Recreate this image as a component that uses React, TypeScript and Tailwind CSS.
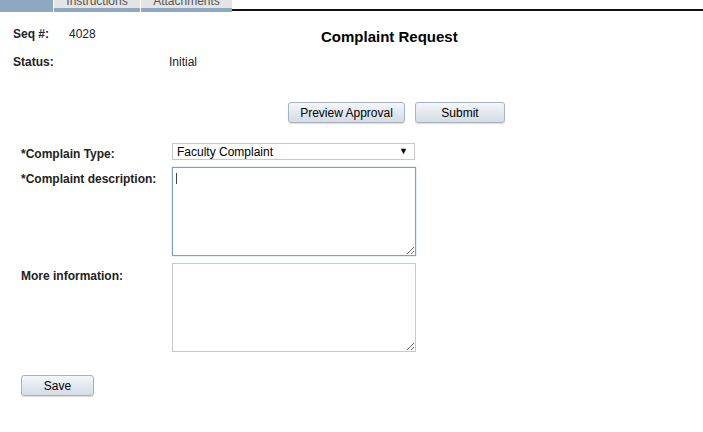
const btn =
  "h-[21px] rounded-[3px] border border-[#a9b3bf] bg-gradient-to-b from-[#f4f7fa] to-[#d3dbe4] text-[12px] text-black shadow-[0_1px_1px_rgba(0,0,0,0.15)]";

function Tabs() {
  return (
    <div className="flex h-[12px] items-end">
      <div className="h-[12px] w-[53px] shrink-0 bg-[#8fa8c2]" />
      <div className="ml-[1px] flex h-[12px] w-[86px] shrink-0 flex-col">
        <div className="flex-1 overflow-hidden bg-[#e4e4e4] text-center text-[12px] leading-[2px] text-[#555]">Instructions</div>
        <div className="h-[4px] bg-[#8fa8c2]" />
      </div>
      <div className="ml-[1px] flex h-[12px] w-[91px] shrink-0 flex-col">
        <div className="flex-1 overflow-hidden bg-[#e4e4e4] text-center text-[12px] leading-[2px] text-[#555]">Attachments</div>
        <div className="h-[4px] bg-[#8fa8c2]" />
      </div>
      <div className="mb-[1px] h-[2px] flex-1 bg-[#111]" />
    </div>
  );
}

function Row({ label, children, top }: { label: string; children: React.ReactNode; top: string }) {
  return (
    <div className="flex items-start">
      <div className={`w-[172px] shrink-0 pl-[21px] font-bold leading-[14px] ${top}`}>{label}</div>
      <div className="shrink-0">{children}</div>
    </div>
  );
}

export default function App() {
  return (
    <div className="h-[432px] w-[703px] bg-white font-['Liberation_Sans',Arial,sans-serif] text-[12px] text-[#222]">
      <Tabs />
      <div className="relative">
        <div className="flex pt-[13px]">
          <div className="w-[69px] shrink-0 pl-[13px] font-bold">Seq #:</div>
          <div>4028</div>
        </div>
        <div className="absolute left-[321px] top-[14px] text-[15px] font-bold text-black">Complaint Request</div>
        <div className="flex pt-[10px]">
          <div className="w-[169px] shrink-0 pl-[13px] font-bold">Status:</div>
          <div>Initial</div>
        </div>
      </div>

      <div className="mt-[31px] flex gap-[10px] pl-[288px]">
        <button className={`${btn} w-[117px]`}>Preview Approval</button>
        <button className={`${btn} w-[90px]`}>Submit</button>
      </div>

      <div className="mt-[20px] flex flex-col">
        <Row label="*Complain Type:" top="pt-[4px]">
          <div className="flex h-[17px] w-[243px] items-center justify-between border border-[#c8c8c8] pl-[4px] pr-[6px] text-[12px] text-black">
            <span>Faculty Complaint</span>
            <span className="text-[9px]">▼</span>
          </div>
        </Row>
        <div className="mt-[6px]">
          <Row label="*Complaint description:" top="pt-[5px]">
            <div className="relative">
              <textarea
                className="block h-[89px] w-[244px] resize border border-[#7aa0cf] outline-none shadow-[0_0_1px_#7aa0cf]"
                defaultValue=""
              />
              <span className="absolute left-[4px] top-[6px] h-[11px] w-px bg-[#444]" />
            </div>
          </Row>
        </div>
        <div className="mt-[7px]">
          <Row label="More information:" top="pt-[6px]">
            <textarea className="block h-[89px] w-[244px] resize border border-[#c8c8c8] outline-none" defaultValue="" />
          </Row>
        </div>
      </div>

      <div className="mt-[23px] pl-[21px]">
        <button className={`${btn} w-[73px]`}>Save</button>
      </div>
    </div>
  );
}
